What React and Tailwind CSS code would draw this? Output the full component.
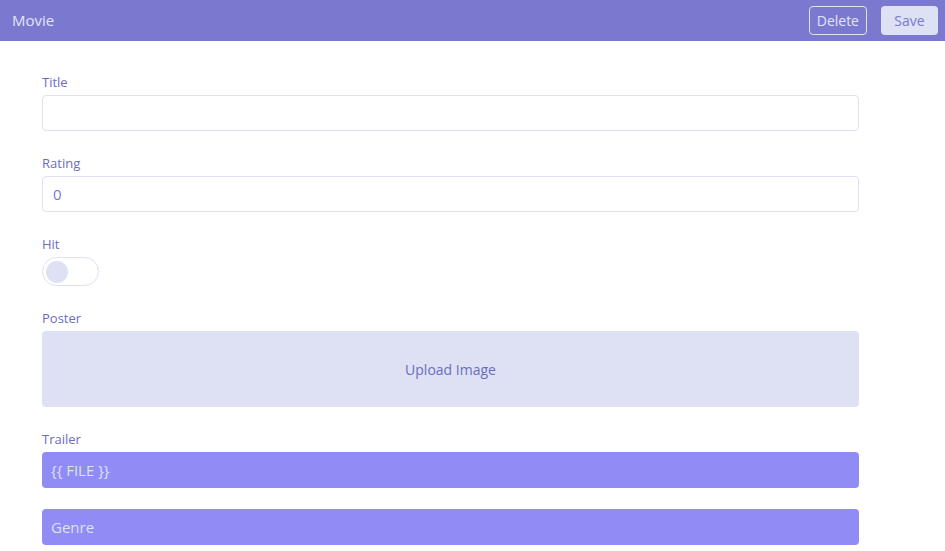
import React, { useState } from 'react';

const FONT = { fontFamily: '"Open Sans", "Noto Sans", sans-serif' };

const Label = ({ children }) => (
  <label className="block text-[13px] leading-5 text-[#6c6cbf] mb-[3px]">{children}</label>
);

export default function App() {
  const [title, setTitle] = useState('');
  const [rating, setRating] = useState('0');
  const [hit, setHit] = useState(false);

  return (
    <div className="min-h-screen bg-white" style={FONT}>
      {/* ─── Header ─── */}
      <div className="h-[41px] bg-[#7b78d0] flex items-center justify-between pl-3 pr-[7px]">
        <div className="text-[15px] text-[#e2e5f7] -mt-px">Movie</div>
        <div className="flex items-center gap-[14px]">
          <button className="h-[29px] px-[7px] rounded border border-[#dde1f3] text-[14px] text-[#e2e5f7]">
            Delete
          </button>
          <button className="h-[29px] w-[57px] rounded bg-[#dde1f3] text-[14px] text-[#7b78d0]">
            Save
          </button>
        </div>
      </div>

      {/* ─── Form ─── */}
      <div className="pt-[31px] pl-[42px] w-[859px] flex flex-col gap-[22px]">
        <div>
          <Label>Title</Label>
          <input
            value={title}
            onChange={e => setTitle(e.target.value)}
            className="w-full h-9 rounded border border-[#dde1f3] px-[10px] text-[15px] text-[#7b78d0] outline-none"
          />
        </div>
        <div>
          <Label>Rating</Label>
          <input
            value={rating}
            onChange={e => setRating(e.target.value)}
            className="w-full h-9 rounded border border-[#dde1f3] px-[10px] text-[15px] text-[#7b78d0] outline-none"
          />
        </div>
        <div>
          <Label>Hit</Label>
          <button
            onClick={() => setHit(!hit)}
            className="w-[57px] h-[29px] rounded-full border border-[#dde1f3] bg-white flex items-center px-[3px]"
          >
            <span className={`w-[22px] h-[22px] rounded-full bg-[#dde1f3] transition-transform ${hit ? 'translate-x-[28px]' : ''}`} />
          </button>
        </div>
        <div>
          <Label>Poster</Label>
          <div className="h-[76px] rounded bg-[#dde1f3] flex items-center justify-center text-[14px] text-[#6c6cbf]">
            Upload Image
          </div>
        </div>
        <div className="flex flex-col gap-[21px]">
          <div>
            <Label>Trailer</Label>
            <div className="h-9 rounded bg-[#918cf5] flex items-center px-[9px] text-[15px] text-[#dde1f3]">
              {'{{ FILE }}'}
            </div>
          </div>
          <div className="h-9 rounded bg-[#918cf5] flex items-center px-[9px] text-[15px] text-[#dde1f3]">
            Genre
          </div>
        </div>
      </div>
    </div>
  );
}
